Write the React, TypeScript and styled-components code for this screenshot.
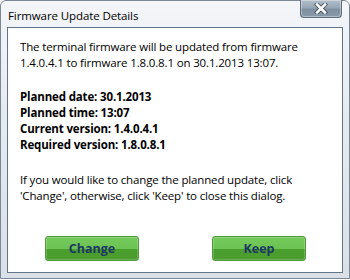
import React from "react";
import styled, { createGlobalStyle } from "styled-components";

const Global = createGlobalStyle`
  html, body { margin: 0; padding: 0; background: #ffffff; }
  body { font-family: "Open Sans", "Noto Sans", sans-serif; }
`;

const Window = styled.div`
  box-sizing: border-box;
  width: 350px;
  height: 279px;
  border: 1px solid #7a8896;
  border-radius: 6px 6px 0 0;
  background: linear-gradient(#f4f6f9, #e6ebf0 40%, #d9e0e8);
  display: flex;
  flex-direction: column;
  padding: 0 6px 5px 6px;
`;

const TitleBar = styled.div`
  height: 26px;
  display: flex;
  align-items: flex-start;
  justify-content: space-between;
`;

const Title = styled.div`
  font-size: 11.5px;
  color: #000;
  padding: 7px 0 0 1px;
  letter-spacing: -0.1px;
`;

const CloseButton = styled.div`
  box-sizing: border-box;
  width: 42px;
  height: 18px;
  margin-top: -1px;
  margin-right: 1px;
  border: 1px solid #5d6c7b;
  border-top: none;
  border-radius: 0 0 4px 4px;
  background: linear-gradient(#b3bfcb, #97a6b5 45%, #7e8fa0 55%, #8a9aab);
  box-shadow: inset 0 0 0 1px rgba(255, 255, 255, 0.35);
  display: flex;
  align-items: center;
  justify-content: center;
`;

const Content = styled.div`
  flex: 1;
  background: #ffffff;
  border: 1px solid #647587;
  padding: 11px 12px 0 12px;
  display: flex;
  flex-direction: column;
  font-size: 11.5px;
  line-height: 16px;
  color: #000;
  letter-spacing: -0.15px;
`;

const Para = styled.p<{ $bold?: boolean; $gap?: number }>`
  margin: ${(p) => p.$gap ?? 0}px 0 0 0;
  font-weight: ${(p) => (p.$bold ? 700 : 400)};
`;

const ButtonRow = styled.div`
  display: flex;
  justify-content: space-between;
  padding: 0 24px 0 25px;
  margin-top: 32px;
`;

const GreenButton = styled.div`
  box-sizing: border-box;
  width: 94px;
  height: 25px;
  border: 1px solid #4d9a37;
  border-radius: 3px;
  background: linear-gradient(#74ca5b 0%, #6cc353 50%, #4b9f2e 51%, #4a9c2e 100%);
  box-shadow: inset 0 0 0 1px rgba(255, 255, 255, 0.2);
  display: flex;
  align-items: center;
  justify-content: center;
  font-weight: 700;
  font-size: 12.5px;
  color: #1c3863;
  letter-spacing: 0;
`;

export default function App() {
  return (
    <>
      <Global />
      <Window>
        <TitleBar>
          <Title>Firmware Update Details</Title>
          <CloseButton>
            <svg width="14" height="11" viewBox="0 0 14 11">
              <path
                d="M3 1.5 L11 9.5 M11 1.5 L3 9.5"
                stroke="#3d4a57"
                strokeWidth="4.2"
                strokeLinecap="square"
              />
              <path
                d="M3 1.5 L11 9.5 M11 1.5 L3 9.5"
                stroke="#ffffff"
                strokeWidth="2.6"
                strokeLinecap="square"
              />
            </svg>
          </CloseButton>
        </TitleBar>
        <Content>
          <Para>
            The terminal firmware will be updated from firmware 1.4.0.4.1 to
            firmware 1.8.0.8.1 on 30.1.2013 13:07.
          </Para>
          <Para $bold $gap={18}>
            Planned date: 30.1.2013
            <br />
            Planned time: 13:07
            <br />
            Current version: 1.4.0.4.1
            <br />
            Required version: 1.8.0.8.1
          </Para>
          <Para $gap={19}>
            If you would like to change the planned update, click 'Change',
            otherwise, click 'Keep' to close this dialog.
          </Para>
          <ButtonRow>
            <GreenButton>Change</GreenButton>
            <GreenButton>Keep</GreenButton>
          </ButtonRow>
        </Content>
      </Window>
    </>
  );
}
